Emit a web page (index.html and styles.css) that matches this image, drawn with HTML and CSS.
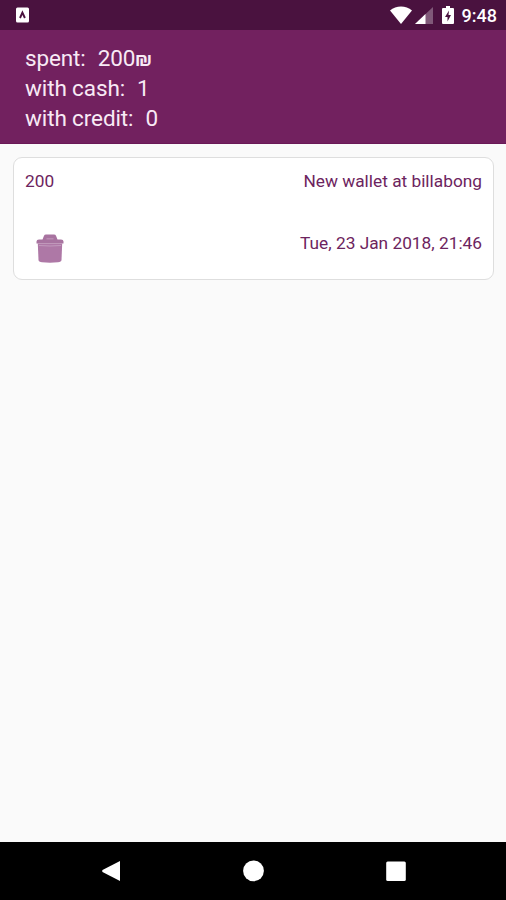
FILE: index.html
```html
<!DOCTYPE html>
<html lang="en">
<head>
<meta charset="utf-8">
<meta name="viewport" content="width=device-width">
<title>Expenses</title>
<link rel="stylesheet" href="styles.css">
</head>
<body>
<div class="status">
  <svg class="app-icon" viewBox="0 0 16 16" width="16" height="16"><rect x="1" y="0.5" width="13" height="15" rx="1.5" fill="#fff"/><path d="M5 11 7.4 5.500 9.900 11" fill="none" stroke="#4a123f" stroke-width="1.900"/></svg>
  <div class="status-right">
    <svg class="wifi" viewBox="0 0 22 18" width="22" height="18"><path d="M0 4.6C6-.9 16-.9 22 4.6L11 18Z" fill="#fff"/></svg>
    <svg class="signal" viewBox="0 0 18 17" width="18" height="17"><path d="M0 17 18 0V17Z" fill="#fff" opacity=".3"/><path d="M0 17 10.5 7V17Z" fill="#fff"/></svg>
    <svg class="battery" viewBox="0 0 12 18" width="12" height="18"><path d="M1 2h3V0h4v2h3q1 0 1 1v14q0 1-1 1H1q-1 0-1-1V3q0-1 1-1Z" fill="#fff"/><path d="M7 4.5 3 11h2.5v4.5L9 9H6.5Z" fill="#4a123f"/></svg>
    <span class="clock">9:48</span>
  </div>
</div>
<header class="summary">
  <div class="line"><span>spent:</span><span>200<span class="currency">₪</span></span></div>
  <div class="line"><span>with cash:</span><span>1</span></div>
  <div class="line"><span>with credit:</span><span>0</span></div>
</header>
<main class="content">
  <article class="card">
    <div class="row"><span class="amount">200</span><span class="title">New wallet at billabong</span></div>
    <div class="row row-bottom">
      <svg class="trash" viewBox="0 0 28 29" width="28" height="29"><path d="M.5 9.500V7.500Q.5 5.500 3 5.500H6.500L8 1.800Q8.500.5 10 .5h8q1.500 0 2 1.300L21.500 5.500H25Q27.500 5.500 27.500 7.500V9.500Z" fill="#a873a0"/><path d="M1.800 9.500H26.200L25.500 26Q25.300 28 22 28.300Q14 29 6 28.300Q2.700 28 2.500 26Z" fill="#ae78a6"/><path d="M3 11.500Q14 12.500 25 11.500" fill="none" stroke="#c29abd" stroke-width="1"/><path d="M10.500 4.800h7" stroke="#bd92b7" stroke-width="1.200"/></svg>
      <span class="date">Tue, 23 Jan 2018, 21:46</span>
    </div>
  </article>
</main>
<nav class="navbar">
  <svg viewBox="0 0 22 22" width="22" height="22"><path d="M19 1V21L1.500 12Q.7 11 1.500 10Z" fill="#fff"/></svg>
  <svg viewBox="0 0 22 22" width="22" height="22"><circle cx="10.500" cy="10.800" r="10.400" fill="#fff"/></svg>
  <svg viewBox="0 0 22 22" width="22" height="22"><rect x="1.200" y="1.600" width="19.600" height="19.400" rx="1.500" fill="#fff"/></svg>
</nav>
</body>
</html>
```

FILE: styles.css
```css
* { box-sizing: border-box; }

body {
  margin: 0;
  height: 900px;
  display: flex;
  flex-direction: column;
  overflow: hidden;
  background: #fafafa;
  font-family: Roboto, "Liberation Sans", sans-serif;
}

svg { display: block; flex: none; }

.status {
  height: 30px;
  padding: 0 9px 0 15px;
  display: flex;
  align-items: center;
  justify-content: space-between;
  background: #4a123f;
}

.status-right { display: flex; align-items: center; }
.signal { margin-left: 3px; }
.battery { margin-left: 9px; }

.clock {
  margin-left: 8px;
  padding-top: 2px;
  color: #fff;
  font-size: 18px;
  line-height: 20px;
  font-weight: 500;
}

.summary {
  height: 114px;
  padding: 13px 25px 0;
  background: #72215f;
  border-bottom: 1px solid #6a1857;
  color: #f8eaf5;
}

.line {
  display: flex;
  gap: 12px;
  height: 30px;
  font-size: 22.5px;
  line-height: 30px;
  letter-spacing: -0.12px;
  white-space: nowrap;
}

.currency {
  font-size: 20px;
  font-weight: 500;
}

.content { flex: 1; padding: 13px 12px 0 13px; }

.card {
  height: 123px;
  padding: 12px 11px 0;
  display: flex;
  flex-direction: column;
  background: #fff;
  border: 1px solid #dedede;
  border-radius: 9px;
  color: #6d245e;
  font-size: 17.3px;
  line-height: 22px;
}

.row { display: flex; justify-content: space-between; height: 22px; }
.row-bottom { margin-top: 40px; }
.trash { margin: 2px 0 0 11px; }

.navbar {
  height: 58px;
  padding: 0 99px 0 101px;
  display: flex;
  align-items: center;
  justify-content: space-between;
  background: #000;
}
```
